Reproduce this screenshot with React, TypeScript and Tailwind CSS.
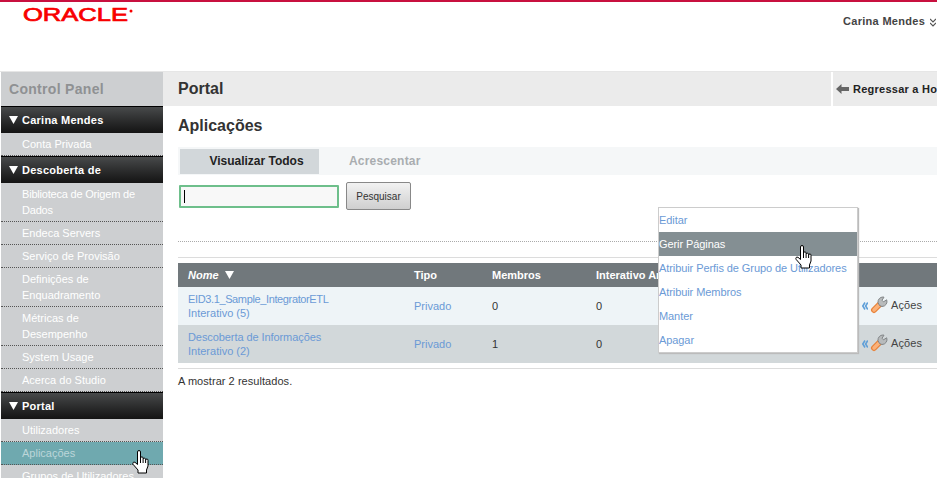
import React from "react";

const font = "font-['Liberation_Sans',Arial,sans-serif]";

function Hand({ className }: { className: string }) {
  return (
    <svg className={className} width="18" height="24" viewBox="0 0 18 24">
      <path
        d="M5.5 2a1.5 1.5 0 0 1 3 0V8a1.3 1.3 0 0 1 2.6 0.3V9a1.3 1.3 0 0 1 2.5 0.3V10a1.2 1.2 0 0 1 2.4 0.4V16l-1.5 4v3H6v-3L1.2 14.5c-1-1.5 0.2-3 1.8-2.2L5.5 14.5Z"
        fill="#fff"
        stroke="#000"
        strokeWidth="1"
        strokeLinejoin="round"
      />
      <path d="M8.5 8v5M11.1 9v4M13.6 10v3" stroke="#000" strokeWidth="1" fill="none" />
    </svg>
  );
}

function Wrench() {
  return (
    <svg width="18" height="18" viewBox="0 0 18 18" className="-mt-[2px] shrink-0">
      <path d="M4 14L10 8" stroke="#e8823a" strokeWidth="6" strokeLinecap="round" />
      <path d="M4 14L10 8" stroke="#fbb27a" strokeWidth="3.5" strokeLinecap="round" />
      <path
        d="M9.5 9.5L8 6.5A5 5 0 0 1 13 1L14 1.2L12 4.2L13.5 5.8L16.7 3.8A5 5 0 0 1 12 10.5Z"
        fill="#b8bbbc"
        stroke="#818587"
        strokeWidth="1"
        strokeLinejoin="round"
      />
    </svg>
  );
}

function Chevrons() {
  return (
    <svg width="6" height="8" viewBox="0 0 6 8" fill="none" stroke="#5f9fd8" strokeWidth="1.6" className="-mt-[1px] shrink-0">
      <path d="M3 0.5L0.8 4L3 7.5M5.8 0.5L3.6 4L5.8 7.5" />
    </svg>
  );
}

function Tri() {
  return (
    <svg width="9" height="8" viewBox="0 0 9 8" className="shrink-0">
      <path d="M0 0H9L4.5 8Z" fill="#fff" />
    </svg>
  );
}

function SectionHead({ title }: { title: string }) {
  return (
    <div className="flex h-[27px] items-center gap-[4px] border-t border-black bg-gradient-to-b from-[#484a4b] to-[#141414] pl-[8px] text-[11px] font-bold tracking-[0.25px] text-white">
      <Tri />
      <span>{title}</span>
    </div>
  );
}

function Item({ label, active, tight }: { label: React.ReactNode; active?: boolean; tight?: boolean }) {
  return (
    <div
      className={`border-b border-dotted border-[#555] py-[3px] pl-[21px] pr-[20px] text-[11px] leading-[16px] ${
        active ? "bg-[#6fa9af] text-[#bcd6d9]" : "text-white"
      } ${tight ? "tracking-[-0.2px]" : ""}`}
    >
      {label}
    </div>
  );
}

function Row({
  name,
  count,
  members,
  bg,
  nameClass,
}: {
  name: string;
  count: string;
  members: string;
  bg: string;
  nameClass: string;
}) {
  return (
    <div className={`grid h-[38px] grid-cols-[236px_78px_104px_266px_1fr] items-center text-[11px] ${bg}`}>
      <div className="pl-[10px] leading-[14px] text-[#6b9ad6]">
        <div className={nameClass}>{name}</div>
        <div>{count}</div>
      </div>
      <div className="text-[#6b9ad6]">Privado</div>
      <div className="text-[#333]">{members}</div>
      <div className="text-[#333]">0</div>
      <div className="flex items-center gap-[2px] text-[#444]">
        <Chevrons />
        <Wrench />
        <span className="-mt-[1px] ml-[1px] tracking-[0.1px]">Ações</span>
      </div>
    </div>
  );
}

const menu = ["Editar", "Gerir Páginas", "Atribuir Perfis de Grupo de Utilizadores", "Atribuir Membros", "Manter", "Apagar"];

export default function App() {
  return (
    <div className={`relative h-[478px] w-[937px] overflow-hidden bg-white ${font}`}>
      <header className="flex h-[72px] justify-between border-t-2 border-b border-t-[#c8103f] border-b-[#e6e6e6]">
        <svg width="140" height="24" viewBox="0 0 140 24" className="ml-[20px] mt-[3px]">
          <text
            x="3"
            y="16"
            fontSize="18"
            fontWeight="400"
            fontFamily="Liberation Sans, sans-serif"
            fill="#f80000"
            stroke="#f80000"
            strokeWidth="0.7"
            textLength="105"
            lengthAdjust="spacingAndGlyphs"
          >
            ORACLE
          </text>
          <circle cx="111" cy="6" r="1.5" fill="#f80000" />
        </svg>
        <div className="flex h-[38px] w-[94px] shrink-0 items-center gap-[5px] overflow-hidden text-[11px] font-bold text-[#444]">
          <span className="whitespace-nowrap tracking-[0.3px]">Carina Mendes</span>
          <svg width="6" height="9" viewBox="0 0 6 9" className="mt-[2px] shrink-0" fill="none" stroke="#555" strokeWidth="1.2">
            <path d="M0 1L3 4L6 1M0 5L3 8L6 5" />
          </svg>
        </div>
      </header>

      <div className="flex h-[406px] pl-px">
        <aside className="w-[162px] shrink-0 overflow-hidden bg-[#cdcfd1]">
          <div className="flex h-[34px] items-center pl-[8px] text-[14px] font-bold tracking-[0.3px] text-[#8f9193]">Control Panel</div>
          <SectionHead title="Carina Mendes" />
          <Item label="Conta Privada" />
          <SectionHead title="Descoberta de" />
          <Item label="Biblioteca de Origem de Dados" tight />
          <Item label="Endeca Servers" />
          <Item label="Serviço de Provisão" />
          <Item label="Definições de Enquadramento" />
          <Item label="Métricas de Desempenho" />
          <Item label="System Usage" />
          <Item label="Acerca do Studio" />
          <SectionHead title="Portal" />
          <Item label="Utilizadores" />
          <Item label="Aplicações" active />
          <Item label="Grupos de Utilizadores" />
        </aside>

        <main className="min-w-0 flex-1 overflow-hidden">
          <div className="flex h-[34px] items-stretch bg-[#ebebeb]">
            <div className="flex-1 pl-[15px] text-[16px] font-bold leading-[33px] text-[#333]">Portal</div>
            <div className="flex w-[106px] shrink-0 items-center gap-[4px] overflow-hidden border-l-2 border-white pl-[3px] text-[11px] font-bold tracking-[0.25px] text-[#222]">
              <svg width="13" height="10" viewBox="0 0 13 10" className="shrink-0">
                <path d="M0 5L5.5 0V3H13V7H5.5V10Z" fill="#666" />
              </svg>
              <span className="whitespace-nowrap">Regressar a Home</span>
            </div>
          </div>

          <div className="pl-[15px]">
            <h1 className="mt-[10px] text-[16px] font-bold leading-[20px] text-[#333]">Aplicações</h1>
            <div className="mt-[11px] flex h-[28px] items-center bg-[#f5f7f8] pl-[2px] text-[12px] font-bold">
              <div className="flex h-[25px] w-[139px] items-center justify-center bg-[#d2d7da] pl-[14px] text-[#222]">Visualizar Todos</div>
              <div className="ml-[30px] tracking-[0.2px] text-[#a9adb0]">Acrescentar</div>
            </div>

            <div className="mt-[7px] flex items-center gap-[7px]">
              <div className="ml-px flex h-[23px] w-[160px] items-center rounded-[1px] border-2 border-[#6ebf8b] bg-[#f8f8f8] pl-[3px]">
                <div className="h-[13px] w-px bg-black" />
              </div>
              <div className="flex h-[28px] w-[65px] items-center justify-center rounded-[2px] border border-[#888] bg-gradient-to-b from-[#f2f2f2] to-[#cfcfcf] text-[10px] text-[#333]">
                Pesquisar
              </div>
            </div>

            <div className="mt-[31px] border-t border-dotted border-[#aaa]" />
            <div className="mt-[15px] border-t border-[#dcdcdc]" />

            <div className="mt-[5px] grid h-[24px] grid-cols-[236px_78px_104px_1fr] items-center whitespace-nowrap bg-[#71787c] text-[11px] font-bold text-white">
              <div className="flex items-center gap-[6px] pl-[10px]">
                <span className="italic">Nome</span>
                <Tri />
              </div>
              <div>Tipo</div>
              <div>Membros</div>
              <div>Interativo Anónimo</div>
            </div>
            <Row name="EID3.1_Sample_IntegratorETL" count="Interativo (5)" members="0" bg="bg-[#eef4f7]" nameClass="tracking-[-0.37px]" />
            <Row name="Descoberta de Informações" count="Interativo (2)" members="1" bg="bg-[#d2d8da]" nameClass="tracking-[-0.08px]" />
            <div className="mt-[5px] border-t border-[#dcdcdc]" />
            <p className="mt-[5px] text-[11px] leading-[14px] tracking-[0.05px] text-[#333]">A mostrar 2 resultados.</p>
          </div>
        </main>
      </div>

      <div className="absolute left-[658px] top-[207px] w-[200px] border border-[#ccc] bg-white shadow-[1px_1px_1px_#bbb]">
        {menu.map((m, i) => (
          <div
            key={m}
            className={`h-[24px] whitespace-nowrap pl-0 text-[11px] leading-[24px] tracking-[-0.08px] ${
              i === 1 ? "bg-[#848f93] text-white" : "text-[#6b9ad6]"
            }`}
          >
            {m}
          </div>
        ))}
      </div>

      <Hand className="absolute left-[795px] top-[245px]" />
      <Hand className="absolute left-[132px] top-[450px]" />
    </div>
  );
}
